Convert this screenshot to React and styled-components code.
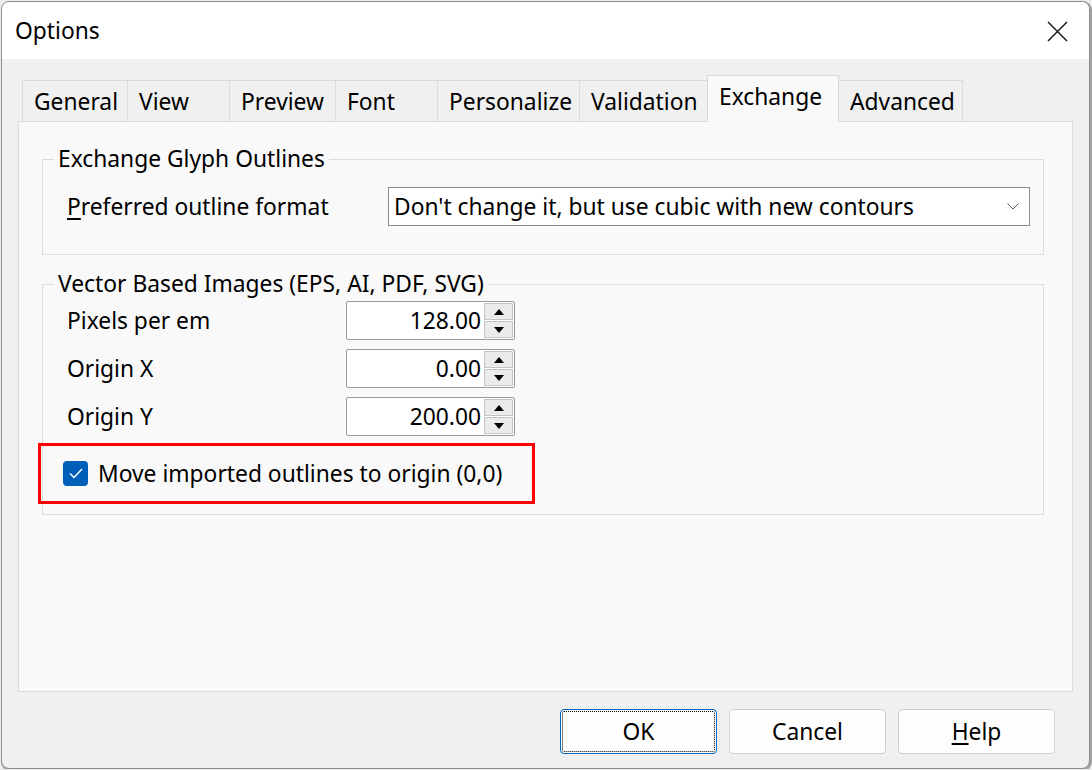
import React from 'react'
import styled, { createGlobalStyle } from 'styled-components'

const Global = createGlobalStyle`
  html, body { margin: 0; padding: 0; background: #ececec; }
  body {
    font-family: "Noto Sans", "Open Sans", sans-serif;
    font-size: 22.8px;
    color: #000;
  }
`

const tabs = [
  { name: 'General', width: 106 },
  { name: 'View', width: 103 },
  { name: 'Preview', width: 107 },
  { name: 'Font', width: 103 },
  { name: 'Personalize', width: 143 },
  { name: 'Validation', width: 129 },
  { name: 'Exchange', width: 132, active: true },
  { name: 'Advanced', width: 125 },
]

const spins = [
  { label: 'Pixels per em', value: '128.00' },
  { label: 'Origin X', value: '0.00' },
  { label: 'Origin Y', value: '200.00' },
]

const Window = styled.div`
  width: 1087px;
  height: 766px;
  margin: 1px 0 0 1px;
  border: 1px solid #8c8c8c;
  border-radius: 8px;
  box-shadow: 1px 1px 0 1px #a3a3a3;
  background: #f0f0f0;
  overflow: hidden;
  display: flex;
  flex-direction: column;
`

const TitleBar = styled.div`
  height: 57px;
  background: #fff;
  display: flex;
  align-items: center;
  justify-content: space-between;
  padding: 1px 21px 0 13px;
  box-sizing: border-box;
  line-height: 30px;
`

const Body = styled.div`
  flex: 1;
  display: flex;
  flex-direction: column;
  padding: 16px 16px 14px 16px;
`

const TabRow = styled.div`
  display: flex;
  align-items: flex-end;
  margin-left: 4px;
  margin-bottom: -1px;
  position: relative;
  z-index: 1;
`

const Tab = styled.div`
  box-sizing: border-box;
  width: ${p => p.$w}px;
  height: ${p => (p.$active ? 47 : 42)}px;
  margin-left: -1px;
  padding: 6px 0 0 11px;
  line-height: 30px;
  border: 1px solid #dadada;
  border-bottom: ${p => (p.$active ? 'none' : '1px solid #dadada')};
  background: ${p => (p.$active ? '#f9f9f9' : '#f0f0f0')};
  white-space: nowrap;
  &:first-child { margin-left: 0; }
`

const Panel = styled.div`
  flex: 1;
  background: #f9f9f9;
  border: 1px solid #dadada;
  padding: 23px 28px 0 23px;
`

const Group = styled.fieldset`
  margin: 0 0 15px 0;
  border: 1px solid #dcdcdc;
  padding: ${p => p.$pad};
  min-width: 0;
`

const Legend = styled.legend`
  margin-left: -13px;
  padding: 0 4px;
  line-height: 28px;
`

const FieldRow = styled.div`
  display: grid;
  grid-template-columns: ${p => p.$label}px ${p => p.$field};
  align-items: center;
  line-height: 30px;
`

const SpinGrid = styled.div`
  display: grid;
  grid-template-columns: 279px 169px;
  row-gap: 9px;
  align-items: center;
  line-height: 30px;
`

const Select = styled.div`
  box-sizing: border-box;
  height: 39px;
  border: 1px solid #8a8a8a;
  background: #fff;
  display: flex;
  align-items: center;
  justify-content: space-between;
  padding: 0 10px 0 5px;
`

const Spin = styled.div`
  box-sizing: border-box;
  height: 39px;
  border: 1px solid #9a9a9a;
  border-radius: 2px;
  background: #fff;
  display: flex;
`

const SpinValue = styled.div`
  flex: 1;
  text-align: right;
  padding-right: 3px;
  line-height: 37px;
`

const SpinButtons = styled.div`
  width: 29px;
  display: flex;
  flex-direction: column;
  gap: 1px;
  padding: 1px 1px 1px 0;
`

const SpinButton = styled.div`
  flex: 1;
  background: #ebebeb;
  border: 1px solid #c4c4c4;
  display: flex;
  align-items: center;
  justify-content: center;
`

const CheckRow = styled.div`
  box-sizing: border-box;
  width: 497px;
  height: 61px;
  margin: 7px 0 0 -29px;
  border: 3px solid #ff0000;
  display: flex;
  align-items: center;
  gap: 10px;
  padding-left: 22px;
`

const CheckBox = styled.div`
  width: 25px;
  height: 25px;
  border-radius: 4px;
  background: #005fb8;
  display: flex;
  align-items: center;
  justify-content: center;
`

const ButtonRow = styled.div`
  display: flex;
  justify-content: flex-end;
  gap: 12px;
  margin-top: 17px;
  padding-right: 18px;
`

const Button = styled.div`
  box-sizing: border-box;
  width: 157px;
  height: 45px;
  border: 1px solid ${p => (p.$default ? '#0067c0' : '#d0d0d0')};
  border-radius: 4px;
  background: #fdfdfd;
  display: flex;
  align-items: center;
  justify-content: center;
  outline: ${p => (p.$default ? '1px dotted #000' : 'none')};
  outline-offset: -3px;
`

const Key = styled.span`
  text-decoration: underline;
  text-underline-offset: 3px;
`

const Arrow = ({ up }) => (
  <svg width="10" height="6" viewBox="0 0 10 6">
    <path d={up ? 'M0 6 L5 0 L10 6 Z' : 'M0 0 L5 6 L10 0 Z'} fill="#000" />
  </svg>
)

export default function App() {
  return (
    <>
      <Global />
      <Window>
        <TitleBar>
          <span>Options</span>
          <svg width="21" height="21" viewBox="0 0 21 21">
            <path d="M1 1 L20 20 M20 1 L1 20" stroke="#1a1a1a" strokeWidth="1.5" />
          </svg>
        </TitleBar>
        <Body>
          <TabRow>
            {tabs.map(t => (
              <Tab key={t.name} $w={t.width} $active={t.active}>{t.name}</Tab>
            ))}
          </TabRow>
          <Panel>
            <Group $pad="14px 13px 28px 24px">
              <Legend>Exchange Glyph Outlines</Legend>
              <FieldRow $label={321} $field="1fr">
                <span><Key>P</Key>referred outline format</span>
                <Select>
                  <span>Don't change it, but use cubic with new contours</span>
                  <svg width="12" height="7" viewBox="0 0 12 7">
                    <path d="M0.5 0.5 L6 6 L11.5 0.5" stroke="#555" strokeWidth="1" fill="none" />
                  </svg>
                </Select>
              </FieldRow>
            </Group>
            <Group $pad="3px 13px 10px 24px">
              <Legend>Vector Based Images (EPS, AI, PDF, SVG)</Legend>
              <SpinGrid>
                {spins.map(s => (
                  <React.Fragment key={s.label}>
                    <span>{s.label}</span>
                    <Spin>
                      <SpinValue>{s.value}</SpinValue>
                      <SpinButtons>
                        <SpinButton><Arrow up /></SpinButton>
                        <SpinButton><Arrow /></SpinButton>
                      </SpinButtons>
                    </Spin>
                  </React.Fragment>
                ))}
              </SpinGrid>
              <CheckRow>
                <CheckBox>
                  <svg width="14" height="11" viewBox="0 0 14 11">
                    <path d="M1 5.5 L5 9.5 L13 1" stroke="#fff" strokeWidth="1.4" fill="none" />
                  </svg>
                </CheckBox>
                <span>Move imported outlines to origin (0,0)</span>
              </CheckRow>
            </Group>
          </Panel>
          <ButtonRow>
            <Button $default>OK</Button>
            <Button>Cancel</Button>
            <Button><span><Key>H</Key>elp</span></Button>
          </ButtonRow>
        </Body>
      </Window>
    </>
  )
}
